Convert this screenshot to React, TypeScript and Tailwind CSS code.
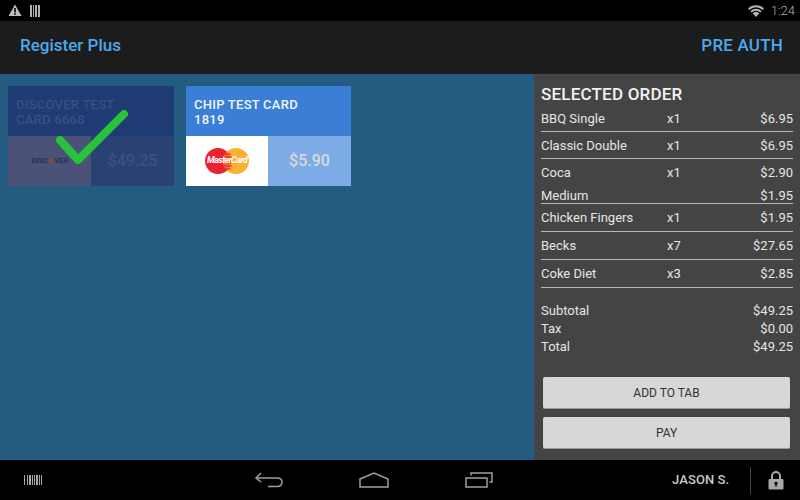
const font = { fontFamily: 'Roboto, sans-serif' };

interface OrderRow {
  name: string;
  qty: string;
  price: string;
  tall?: boolean;
  modifier?: { name: string; price: string };
}

const orderRows: OrderRow[] = [
  { name: 'BBQ Single', qty: 'x1', price: '$6.95' },
  { name: 'Classic Double', qty: 'x1', price: '$6.95' },
  { name: 'Coca', qty: 'x1', price: '$2.90', modifier: { name: 'Medium', price: '$1.95' } },
  { name: 'Chicken Fingers', qty: 'x1', price: '$1.95', tall: true },
  { name: 'Becks', qty: 'x7', price: '$27.65', tall: true },
  { name: 'Coke Diet', qty: 'x3', price: '$2.85', tall: true },
];

const totals = [
  { label: 'Subtotal', value: '$49.25' },
  { label: 'Tax', value: '$0.00' },
  { label: 'Total', value: '$49.25' },
];

function MasterCardLogo() {
  return (
    <div className="relative w-[44px] h-[26px]">
      <svg width="44" height="26" viewBox="0 0 44 26" className="absolute inset-0">
        <circle cx="13" cy="13" r="13" fill="#ee2131" />
        <circle cx="31" cy="13" r="13" fill="#fbb034" />
        <path d="M22 3.5a13 13 0 0 1 0 19a13 13 0 0 1 0-19z" fill="#f26a2a" />
        <path d="M18 6h8M17 9h10M17 18h10M18 21h8" stroke="#ee2131" strokeWidth="1" />
      </svg>
      <span className="absolute inset-0 flex items-center justify-center text-white text-[9px] font-bold italic tracking-[-0.6px]">
        MasterCard
      </span>
    </div>
  );
}

function CheckMark() {
  return (
    <svg width="100" height="70" viewBox="0 0 100 70" className="absolute left-[50px] top-[104px] blur-[0.5px]">
      <path d="M10 36 L28 56 L74 10" fill="none" stroke="#28c23b" strokeWidth="8" strokeLinecap="round" strokeLinejoin="round" />
    </svg>
  );
}

function OrderLine({ row }: { row: OrderRow }) {
  return (
    <div className="border-b border-[#b8b8b8] text-[13px] text-[#e4e4e4]">
      <div className={row.tall ? 'flex items-center h-[27px] pt-[1px]' : row.modifier ? 'flex items-center h-[26px] pt-[2px]' : 'flex items-center h-[26px] pt-[1px]'}>
        <span className="w-[126px]">{row.name}</span>
        <span>{row.qty}</span>
        <span className="ml-auto">{row.price}</span>
      </div>
      {row.modifier && (
        <div className="flex items-center justify-between h-[18px] pt-[3px] leading-none">
          <span>{row.modifier.name}</span>
          <span>{row.modifier.price}</span>
        </div>
      )}
    </div>
  );
}

export default function App() {
  return (
    <div style={font} className="relative w-[800px] h-[500px] overflow-hidden flex flex-col bg-black">
      {/* Status bar */}
      <div className="h-[21px] bg-black flex items-center pl-[8px] pr-[5px] shrink-0">
        <svg width="14" height="13" viewBox="0 0 14 13">
          <path d="M7 0.5 L13.5 12 H0.5 Z" fill="#bdbdbd" />
          <rect x="6.2" y="4" width="1.6" height="4.5" fill="#000" />
          <rect x="6.2" y="9.3" width="1.6" height="1.6" fill="#000" />
        </svg>
        <svg width="10" height="12" viewBox="0 0 10 12" className="ml-[8px]">
          <path d="M0 0h2v12H0zM3 0h1v12H3zM5 0h2v12H5zM8 0h2v12H8z" fill="#b0b0b0" />
        </svg>
        <svg width="16" height="12" viewBox="0 0 16 12" className="ml-auto">
          <path d="M0 3.4 A11.5 11.5 0 0 1 16 3.4 L14.6 5 A9.5 9.5 0 0 0 1.4 5 Z" fill="#b4b4b4" />
          <path d="M2.4 6 A8 8 0 0 1 13.6 6 L12.3 7.4 A6.2 6.2 0 0 0 3.7 7.4 Z" fill="#b4b4b4" />
          <path d="M4.6 8.3 A5 5 0 0 1 11.4 8.3 L8 12 Z" fill="#b4b4b4" />
        </svg>
        <span className="ml-[7px] text-[13px] font-light text-[#b4b4b4]">1:24</span>
      </div>

      {/* Action bar */}
      <div className="h-[53px] bg-[#1c1c1c] flex items-center justify-between pl-[20px] pr-[17px] shrink-0 border-b border-[#222]">
        <span className="text-[17px] font-medium text-[#4ca9ee] -mt-[3px]">Register Plus</span>
        <span className="text-[17px] tracking-[0.2px] font-medium text-[#4ca9ee] -mt-[3px]">PRE AUTH</span>
      </div>

      {/* Content */}
      <div className="flex-1 flex min-h-0">
        <div className="w-[534px] bg-[#235c80] flex items-start gap-[12px] pl-[8px] pt-[12px]">
          <div className="w-[166px] h-[100px] flex flex-col bg-[#1f3b74]">
            <div className="h-[50px] px-[8px] pt-[11px] text-[13px] tracking-[0.25px] leading-[15px] font-medium text-[#36507f]">
              DISCOVER TEST
              <br />
              CARD 6668
            </div>
            <div className="flex h-[50px]">
              <div className="w-[83px] bg-[#4a5278] flex items-center justify-center pl-[1px]">
                <span className="flex items-center text-[8px] tracking-[-0.1px] font-medium text-[#1f2c57]">
                  DISC
                  <span className="w-[6px] h-[6px] rounded-full bg-[#7d4a45]" />
                  VER
                </span>
              </div>
              <div className="flex-1 bg-[#2a4273] flex items-center justify-center text-[16px] font-medium text-[#3a5280]">
                $49.25
              </div>
            </div>
          </div>

          <div className="w-[165px] h-[100px] flex flex-col bg-[#3a7fd5]">
            <div className="h-[50px] px-[8px] pt-[11px] text-[13px] tracking-[0.25px] leading-[15px] font-medium text-[#f0f5fb]">
              CHIP TEST CARD
              <br />
              1819
            </div>
            <div className="flex h-[50px]">
              <div className="w-[82px] bg-white flex items-center justify-center">
                <MasterCardLogo />
              </div>
              <div className="flex-1 bg-[#7dabe6] flex items-center justify-center text-[16px] font-medium text-[#d9d9d9]">
                $5.90
              </div>
            </div>
          </div>
        </div>

        {/* Selected order */}
        <div className="flex-1 bg-[#444444] flex flex-col pt-[10px] pl-[7px] pr-[7px]">
          <div className="text-[17px] tracking-[0.2px] font-medium text-[#f2f2f2] leading-[20px] mb-[1px]">SELECTED ORDER</div>
          {orderRows.map(row => (
            <OrderLine key={row.name} row={row} />
          ))}
          <div className="mt-[14px] text-[13px] text-[#e4e4e4] leading-[18px]">
            {totals.map(t => (
              <div key={t.label} className="flex justify-between">
                <span>{t.label}</span>
                <span>{t.value}</span>
              </div>
            ))}
          </div>
          <div className="mt-[21px] flex flex-col gap-[8px] pl-[2px] pr-[3px]">
            <button className="h-[32px] rounded-[2px] bg-[#d6d7d6] border-b border-[#9a9a9a] text-[12px] text-[#333]">ADD TO TAB</button>
            <button className="h-[32px] rounded-[2px] bg-[#d6d7d6] border-b border-[#9a9a9a] text-[12px] text-[#333]">PAY</button>
          </div>
        </div>
      </div>

      {/* Navigation bar */}
      <div className="h-[40px] bg-black flex items-center shrink-0">
        <svg width="18" height="10" viewBox="0 0 18 10" className="ml-[24px]">
          <path d="M0 0h1v10H0zM3 0h1v10H3zM5 0h2v10H5zM8 0h1v10H8zM10 0h1v10h-1zM12 0h2v10h-2zM15 0h1v10h-1zM17 0h1v10h-1z" fill="#a8a8a8" />
        </svg>
        <svg width="28" height="16" viewBox="0 0 28 16" className="ml-[213px]">
          <path d="M6 1 L1 6 L6 10" fill="none" stroke="#a0a0a0" strokeWidth="1.5" />
          <path d="M1.5 6 H22 Q27 6 27 10 Q27 14.5 22 14.5 H13" fill="none" stroke="#a0a0a0" strokeWidth="1.5" />
        </svg>
        <svg width="30" height="16" viewBox="0 0 30 16" className="ml-[76px]">
          <path d="M1 7 L15 1 L29 7 V15 H1 Z" fill="none" stroke="#a0a0a0" strokeWidth="1.5" />
        </svg>
        <svg width="28" height="16" viewBox="0 0 28 16" className="ml-[76px]">
          <rect x="1" y="6" width="21" height="9" fill="none" stroke="#a0a0a0" strokeWidth="1.5" />
          <path d="M6 3.5 V1 H27 V10 H24.5" fill="none" stroke="#a0a0a0" strokeWidth="1.5" />
        </svg>
        <span className="ml-[179px] text-[13px] tracking-[0.1px] font-medium text-[#c8c8c8]">JASON S.</span>
        <div className="ml-[21px] w-px h-[27px] bg-[#444]" />
        <svg width="16" height="20" viewBox="0 0 16 20" className="ml-[17px]">
          <path d="M3 9 V6 A5 5 0 0 1 13 6 V9 H11 V6 A3 3 0 0 0 5 6 V9 Z" fill="#a8a8a8" />
          <rect x="0.5" y="9" width="15" height="10.5" rx="1" fill="#a8a8a8" />
          <circle cx="8" cy="13.3" r="1.6" fill="#000" />
          <rect x="7.3" y="13.5" width="1.4" height="3.2" fill="#000" />
        </svg>
      </div>

      <CheckMark />
    </div>
  );
}
